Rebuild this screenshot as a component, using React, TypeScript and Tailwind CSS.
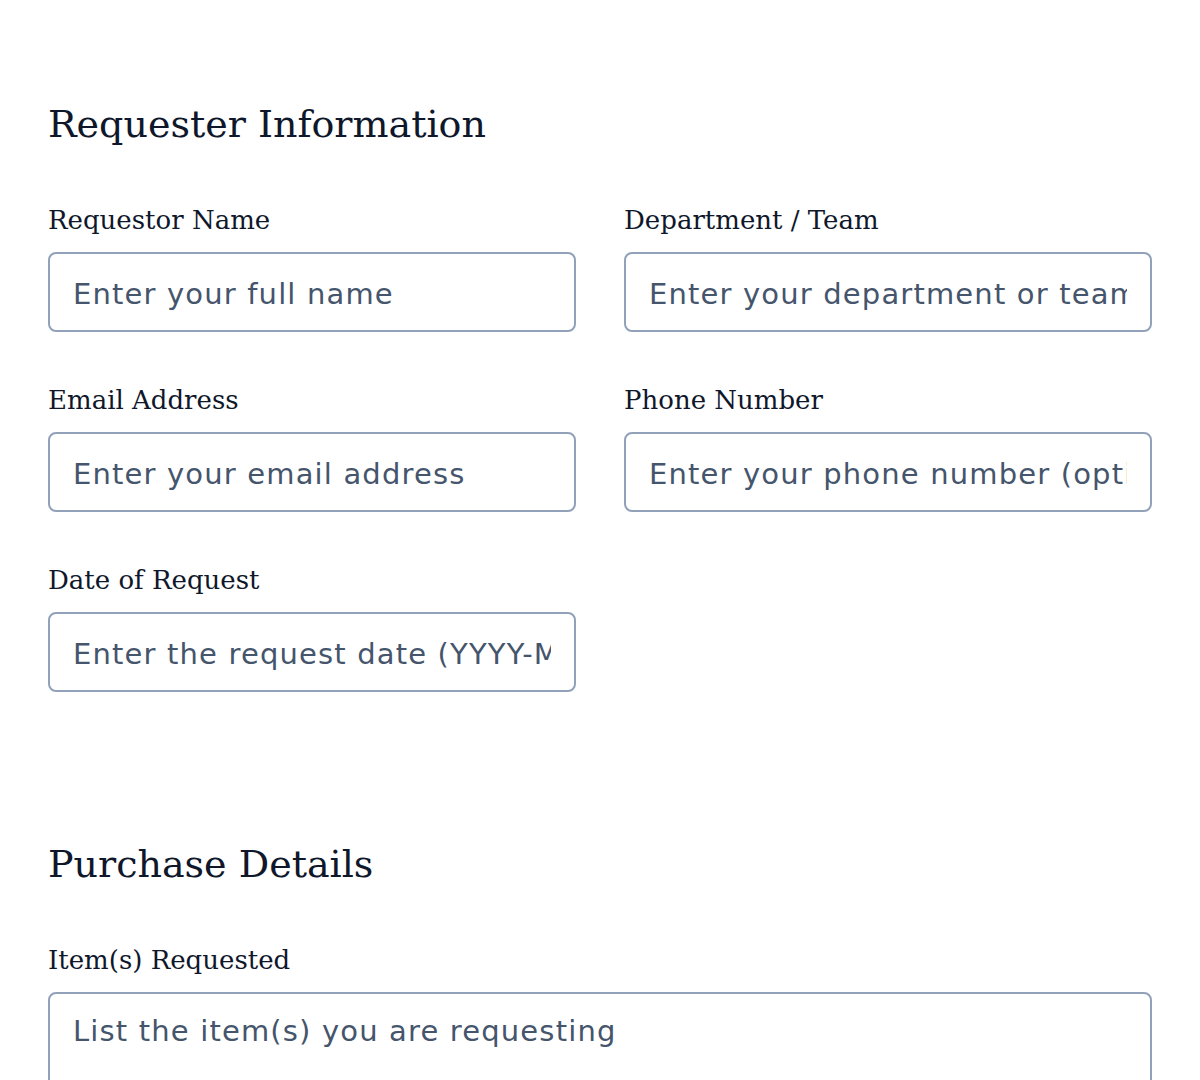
import React from "react";

const serif = { fontFamily: '"DejaVu Serif", "Liberation Serif", serif' };

const Field = ({
  label,
  placeholder,
}: {
  label: string;
  placeholder: string;
}) => (
  <div className="flex flex-col">
    <label
      className="mb-3 h-10 text-[26px] leading-10 text-slate-900 font-['DejaVu_Serif',serif]"
    >
      {label}
    </label>
    <input
      type="text"
      placeholder={placeholder}
      className="h-20 w-full rounded-lg border-2 border-slate-400 bg-white px-[23px] pt-1 text-[29px] tracking-[0.04em] text-slate-900 placeholder:text-slate-600 outline-none font-['DejaVu_Sans',sans-serif]"
    />
  </div>
);

export default function App() {
  return (
    <div className="min-h-screen bg-white px-12 pt-24">
      <section>
        <h2 style={serif} className="mb-12 h-14 text-[38px] leading-[56px] text-slate-900">
          Requester Information
        </h2>
        <div className="grid grid-cols-2 gap-x-12 gap-y-12">
          <Field label="Requestor Name" placeholder="Enter your full name" />
          <Field
            label="Department / Team"
            placeholder="Enter your department or team"
          />
          <Field label="Email Address" placeholder="Enter your email address" />
          <Field
            label="Phone Number"
            placeholder="Enter your phone number (optional)"
          />
          <Field
            label="Date of Request"
            placeholder="Enter the request date (YYYY-MM-DD)"
          />
        </div>
      </section>

      <section className="mt-36">
        <h2 style={serif} className="mb-12 h-14 text-[38px] leading-[56px] text-slate-900">
          Purchase Details
        </h2>
        <div className="flex flex-col">
          <label className="mb-3 h-10 text-[26px] leading-10 text-slate-900 font-['DejaVu_Serif',serif]">
            Item(s) Requested
          </label>
          <textarea
            rows={4}
            placeholder="List the item(s) you are requesting"
            className="w-full resize-none rounded-lg border-2 border-slate-400 bg-white px-[23px] py-4 text-[29px] tracking-[0.04em] text-slate-900 placeholder:text-slate-600 outline-none font-['DejaVu_Sans',sans-serif]"
          />
        </div>
      </section>
    </div>
  );
}
